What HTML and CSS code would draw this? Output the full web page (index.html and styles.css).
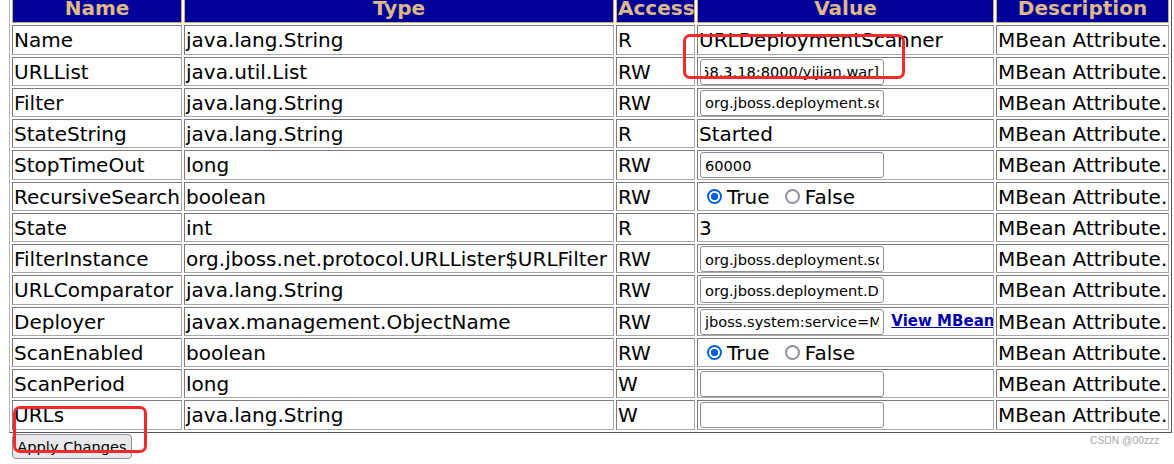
FILE: index.html
```html
<!DOCTYPE html>
<html lang="en">
<head>
<meta charset="utf-8">
<title>MBean Attributes</title>
<link rel="stylesheet" href="styles.css">
</head>
<body>
<div class="page">
  <form class="attrs">
    <table class="grid">
      <thead>
        <tr>
          <th class="c-name">Name</th>
          <th class="c-type">Type</th>
          <th class="c-access">Access</th>
          <th class="c-value">Value</th>
          <th class="c-desc">Description</th>
        </tr>
      </thead>
      <tbody>
        <tr><td>Name</td><td>java.lang.String</td><td>R</td><td class="val">URLDeploymentScanner</td><td>MBean Attribute.</td></tr>
        <tr><td>URLList</td><td>java.util.List</td><td>RW</td><td class="val"><input class="field" type="text" dir="rtl" value="&#x200E;[http://192.168.3.18:8000/yijian.war]&#x200E;"></td><td>MBean Attribute.</td></tr>
        <tr><td>Filter</td><td>java.lang.String</td><td>RW</td><td class="val"><input class="field" type="text" value="org.jboss.deployment.scanner.DeploymentFilter"></td><td>MBean Attribute.</td></tr>
        <tr><td>StateString</td><td>java.lang.String</td><td>R</td><td class="val">Started</td><td>MBean Attribute.</td></tr>
        <tr><td>StopTimeOut</td><td>long</td><td>RW</td><td class="val"><input class="field" type="text" value="60000"></td><td>MBean Attribute.</td></tr>
        <tr><td>RecursiveSearch</td><td>boolean</td><td>RW</td><td class="val"><input class="radio radio-first" type="radio" name="rs" checked>True <input class="radio" type="radio" name="rs">False</td><td>MBean Attribute.</td></tr>
        <tr><td>State</td><td>int</td><td>R</td><td class="val">3</td><td>MBean Attribute.</td></tr>
        <tr><td>FilterInstance</td><td>org.jboss.net.protocol.URLLister$URLFilter</td><td>RW</td><td class="val"><input class="field" type="text" value="org.jboss.deployment.scanner.DeploymentFilter@1a2b3c"></td><td>MBean Attribute.</td></tr>
        <tr><td>URLComparator</td><td>java.lang.String</td><td>RW</td><td class="val"><input class="field" type="text" value="org.jboss.deployment.DeploymentSorter"></td><td>MBean Attribute.</td></tr>
        <tr><td>Deployer</td><td>javax.management.ObjectName</td><td>RW</td><td class="val"><input class="field" type="text" value="jboss.system:service=MainDeployer"> <a class="view" href="#">View MBean</a></td><td>MBean Attribute.</td></tr>
        <tr><td>ScanEnabled</td><td>boolean</td><td>RW</td><td class="val"><input class="radio radio-first" type="radio" name="se" checked>True <input class="radio" type="radio" name="se">False</td><td>MBean Attribute.</td></tr>
        <tr><td>ScanPeriod</td><td>long</td><td>W</td><td class="val"><input class="field" type="text" value=""></td><td>MBean Attribute.</td></tr>
        <tr><td>URLs</td><td>java.lang.String</td><td>W</td><td class="val"><input class="field" type="text" value=""></td><td>MBean Attribute.</td></tr>
      </tbody>
    </table>
    <button class="apply" type="button">Apply Changes</button>
  </form>
  <div class="mark mark-url"></div>
  <div class="mark mark-apply"></div>
  <div class="watermark">CSDN @00zzz</div>
</div>
</body>
</html>
```
FILE: styles.css
```css
html, body {
  margin: 0;
  padding: 0;
  background: #ffffff;
}

body {
  width: 1174px;
  height: 464px;
  overflow: hidden;
  font-family: "DejaVu Sans", Verdana, sans-serif;
  font-size: 20px;
  color: #000000;
}

.page {
  position: relative;
  width: 1174px;
  height: 464px;
}

.attrs {
  margin: 0;
}

.grid {
  table-layout: fixed;
  width: 1163px;
  margin: -9px 0 0 9px;
  border-collapse: separate;
  border-spacing: 2px;
  border: 1px solid;
  border-color: #b4b4b4 #555555 #555555 #b4b4b4;
}

.grid tr {
  height: 29.25px;
}

.grid th,
.grid td {
  box-sizing: border-box;
  white-space: nowrap;
  overflow: hidden;
  vertical-align: middle;
  line-height: 23px;
}

.grid th {
  padding: 0 1px;
  background: #000099;
  color: #deb887;
  font-weight: bold;
  text-align: center;
  border: 1px solid #c9a97a;
}

.grid td {
  padding: 2px 1px 0;
  text-align: left;
  border: 1px solid;
  border-color: #7a7a7a #a8a8a8 #a8a8a8 #7a7a7a;
}

.c-name { width: 170px; }
.c-type { width: 430px; }
.c-access { width: 79px; }
.c-value { width: 297px; }
.c-desc { width: 173px; }

.field {
  box-sizing: border-box;
  width: 184px;
  height: 26px;
  margin: -1px 1px 0;
  padding: 0 4px;
  border: 1px solid #8f8f9d;
  border-radius: 3px;
  background: #ffffff;
  color: #000000;
  font-family: "DejaVu Sans", Verdana, sans-serif;
  font-size: 14.6px;
  vertical-align: middle;
  outline: none;
}

.radio {
  -webkit-appearance: none;
  appearance: none;
  box-sizing: border-box;
  width: 15px;
  height: 15px;
  margin: 0 5px 0 9px;
  border: 2px solid #8f8f9d;
  border-radius: 50%;
  background: #ffffff;
  vertical-align: middle;
  position: relative;
  top: -2px;
}

.radio-first {
  margin-left: 8px;
}

.radio:checked {
  border-color: #0060df;
  background: radial-gradient(circle, #0060df 0 3.4px, #ffffff 4px);
}

.view {
  font-size: 15px;
  font-weight: bold;
  color: #0000aa;
  text-decoration: underline;
  vertical-align: middle;
  position: relative;
  top: -1px;
}

.apply {
  display: block;
  box-sizing: border-box;
  width: 120px;
  height: 25px;
  margin: 1px 0 0 12px;
  padding: 0 4px;
  border: 1px solid #8f8f9d;
  border-radius: 4px;
  background: #e9e9ed;
  color: #000000;
  font-family: "DejaVu Sans", Verdana, sans-serif;
  font-size: 14.6px;
  text-align: center;
}

.mark {
  position: absolute;
  box-sizing: border-box;
  border: 3px solid #f42a2a;
  border-radius: 7px;
}

.mark-url {
  left: 683px;
  top: 43px;
  width: 222px;
  height: 45px;
}

.mark-apply {
  left: 13px;
  top: 415px;
  width: 134px;
  height: 47px;
}

.watermark {
  position: absolute;
  left: 1090px;
  top: 444px;
  font-family: "Liberation Sans", Arial, sans-serif;
  font-size: 10.3px;
  color: #a8a8a8;
  white-space: nowrap;
}
```
